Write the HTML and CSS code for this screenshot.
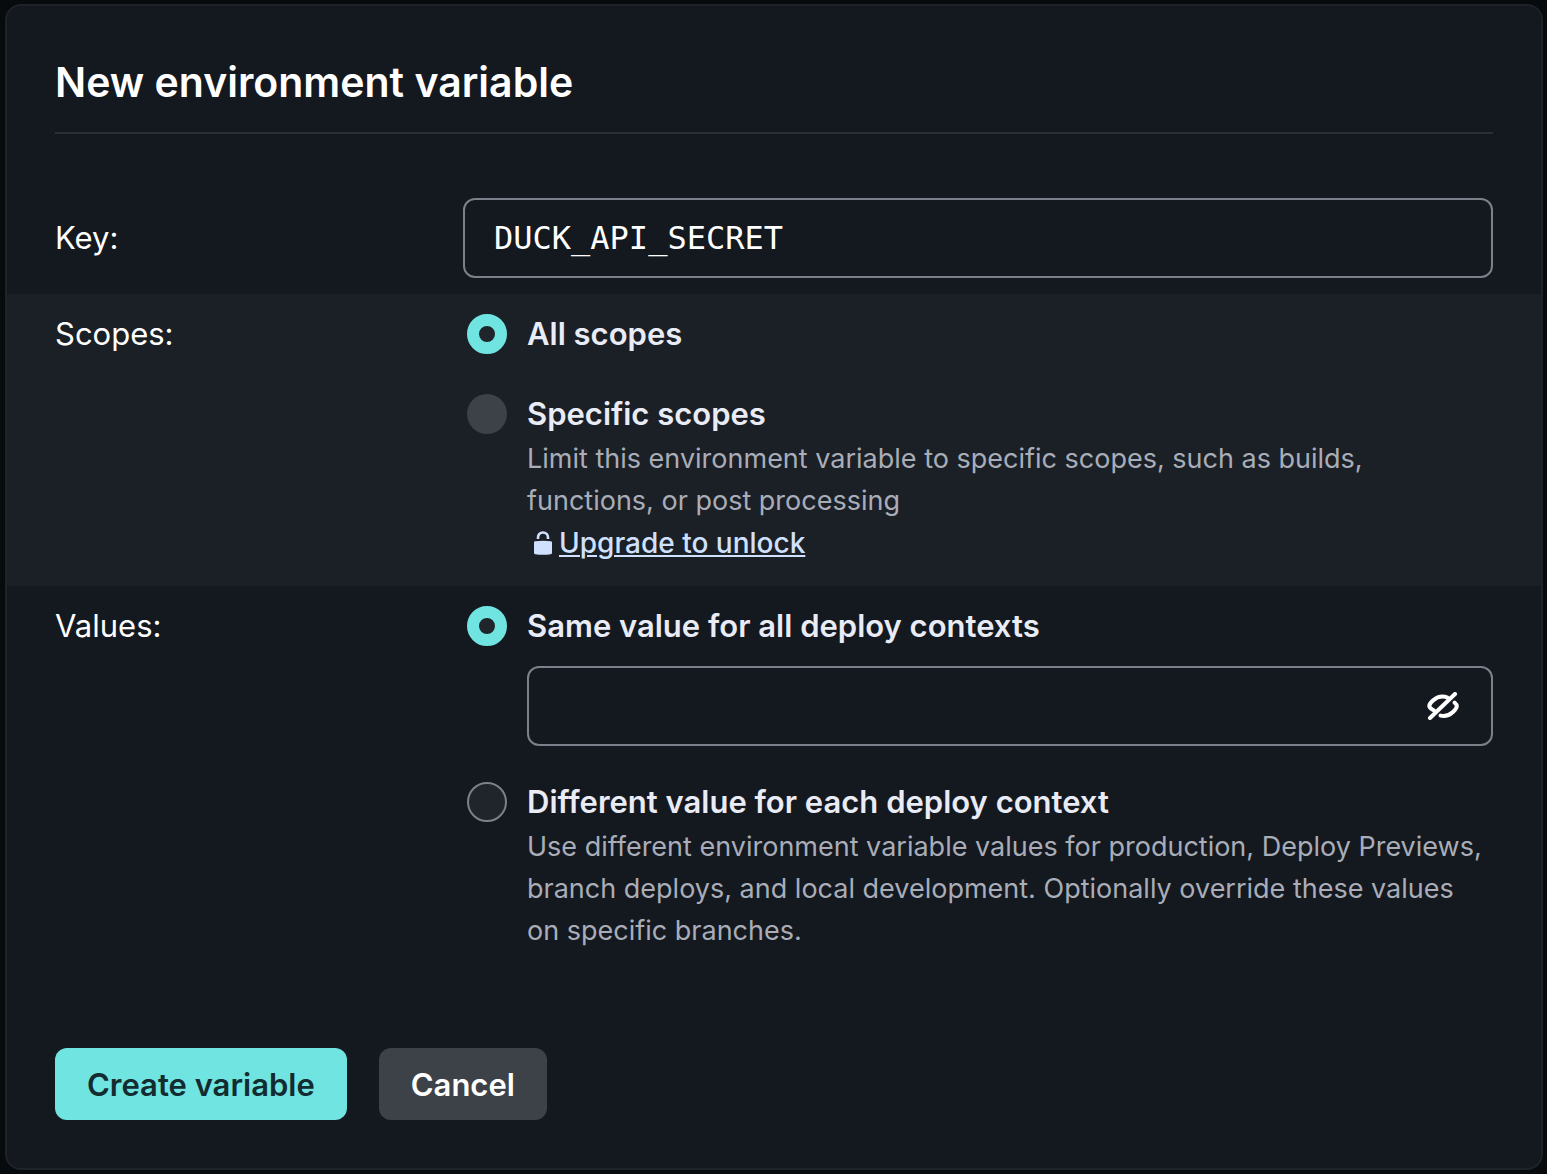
FILE: index.html
```html
<!DOCTYPE html>
<html lang="en">
<head>
<meta charset="utf-8">
<meta name="viewport" content="width=device-width, initial-scale=1">
<title>New environment variable</title>
<link rel="stylesheet" href="styles.css">
</head>
<body>
<main class="card">
  <header class="card-header">
    <h1 class="card-title">New environment variable</h1>
  </header>
  <form class="form">
    <div class="row row-key">
      <label class="row-label" for="key">Key:</label>
      <input class="text-input key-input" id="key" type="text" value="DUCK_API_SECRET" spellcheck="false">
    </div>

    <div class="row row-shaded" role="radiogroup" aria-labelledby="scopes-label">
      <div class="row-label" id="scopes-label">Scopes:</div>
      <div class="options">
        <div class="option">
          <input class="radio" type="radio" name="scope" id="scope-all" checked>
          <label class="option-title" for="scope-all">All scopes</label>
        </div>
        <div class="option">
          <input class="radio" type="radio" name="scope" id="scope-specific" disabled>
          <label class="option-title" for="scope-specific">Specific scopes</label>
          <div class="option-body">
            <p class="description">Limit this environment variable to specific scopes, such as builds, functions, or post processing</p>
            <div class="upgrade">
              <svg class="lock-icon" viewBox="0 0 20 26" aria-hidden="true">
                <path d="M5 9V7.500C5 4.500 7 2.500 10 2.500S15 4.500 15 7.500V9" fill="none" stroke="currentColor" stroke-width="2.600"/>
                <path d="M1 12.500Q1 11.300 2.200 11.200Q10 10.400 17.800 11.200Q19 11.300 19 12.500V23Q19 24.100 17.800 24.300Q10 25.400 2.200 24.300Q1 24.100 1 23Z" fill="currentColor"/>
              </svg>
              <a class="upgrade-link" href="#upgrade">Upgrade to unlock</a>
            </div>
          </div>
        </div>
      </div>
    </div>

    <div class="row" role="radiogroup" aria-labelledby="values-label">
      <div class="row-label" id="values-label">Values:</div>
      <div class="options">
        <div class="option">
          <input class="radio" type="radio" name="value" id="value-same" checked>
          <label class="option-title" for="value-same">Same value for all deploy contexts</label>
          <div class="option-body secret">
            <input class="text-input secret-input" type="password" aria-label="Value" autocomplete="off">
            <button class="reveal" type="button" aria-label="Show value">
              <svg class="eye-icon" viewBox="0 0 32 28" aria-hidden="true">
                <g fill="none" stroke="currentColor" stroke-width="4" stroke-linecap="round" stroke-linejoin="round">
                  <path d="M28 2L3 26"/>
                  <path d="M7 18.500C4 17 2.300 15 2.300 14C2.300 11.500 8 4.600 15.500 4.600Q18 4.600 20.500 5.600"/>
                  <path d="M27.500 10.500C29.200 12 29.800 13.300 29.800 14C29.800 16.500 24 24 16.500 24Q15 24 13.500 23.600"/>
                </g>
              </svg>
            </button>
          </div>
        </div>
        <div class="option">
          <input class="radio" type="radio" name="value" id="value-different">
          <label class="option-title" for="value-different">Different value for each deploy context</label>
          <div class="option-body">
            <p class="description">Use different environment variable values for production, Deploy Previews, branch deploys, and local development. Optionally override these values on specific branches.</p>
          </div>
        </div>
      </div>
    </div>

    <div class="actions">
      <button class="button button-primary" type="submit">Create variable</button>
      <button class="button button-secondary" type="button">Cancel</button>
    </div>
  </form>
</main>
</body>
</html>
```
FILE: styles.css
```css
* {
  box-sizing: border-box;
}

body {
  margin: 0;
  padding: 4px 4px 4px 5px;
  background: #070b0e;
  color: #ffffff;
  font-family: Inter, "Liberation Sans", sans-serif;
  font-size: 31px;
  line-height: 48px;
}

.card {
  border: 2px solid #1f2329;
  border-radius: 16px;
  background: #14181f;
}

.card-header {
  margin: 0 48px;
  padding: 48px 0 22px;
  border-bottom: 2px solid #2a2e36;
}

.card-title {
  margin: 0;
  font-size: 41px;
  font-weight: 600;
  line-height: 56px;
}

.form {
  padding: 48px 0;
}

.row {
  display: grid;
  grid-template-columns: 408px 1fr;
  padding: 16px 48px 22px;
}

.row-key {
  align-items: center;
  padding-bottom: 16px;
}

.row-shaded {
  background: #1b1f26;
}

.text-input {
  width: 100%;
  height: 80px;
  padding: 0 29px;
  border: 2px solid #7d808a;
  border-radius: 12px;
  background: transparent;
  color: #ffffff;
  font: 32px "DejaVu Sans Mono", monospace;
}

.options {
  display: flex;
  flex-direction: column;
  gap: 32px;
  padding-left: 4px;
}

.option {
  display: grid;
  grid-template-columns: 40px 1fr;
  column-gap: 20px;
  align-items: center;
}

.option-title {
  color: #e9ebf5;
  font-weight: 600;
}

.option-body {
  grid-column: 2;
}

.radio {
  appearance: none;
  width: 40px;
  height: 40px;
  margin: 0;
  border: 2px solid #7d808a;
  border-radius: 50%;
  background: #20242b;
}

.radio:checked {
  border: 12px solid #70e4e0;
}

.radio:disabled {
  border: 0;
  background: #3d4249;
}

.description {
  margin: 0;
  color: #a9adb8;
  font-size: 27px;
  line-height: 42px;
}

.upgrade {
  display: flex;
  align-items: center;
  gap: 6px;
  padding-left: 6px;
  color: #d0e1ff;
  font-size: 28px;
  line-height: 42px;
}

.lock-icon {
  width: 20px;
  height: 26px;
}

.upgrade-link {
  color: inherit;
  font-weight: 500;
  text-decoration-thickness: 2px;
  text-underline-offset: 2px;
}

.secret {
  display: grid;
  margin-top: 16px;
  align-items: center;
}

.secret-input {
  grid-area: 1 / 1;
  padding-right: 80px;
}

.reveal {
  display: flex;
  grid-area: 1 / 1;
  justify-self: end;
  margin-right: 26px;
  padding: 8px;
  border: 0;
  background: none;
  color: #ffffff;
}

.eye-icon {
  width: 32px;
  height: 28px;
}

.actions {
  display: flex;
  gap: 32px;
  padding: 74px 48px 0;
}

.button {
  height: 72px;
  padding: 0 32px;
  border: 0;
  border-radius: 12px;
  font: 600 31px Inter, "Liberation Sans", sans-serif;
}

.button-primary {
  background: #70e4e0;
  color: #132c2f;
}

.button-secondary {
  background: #3d4249;
  color: #ffffff;
}
```
